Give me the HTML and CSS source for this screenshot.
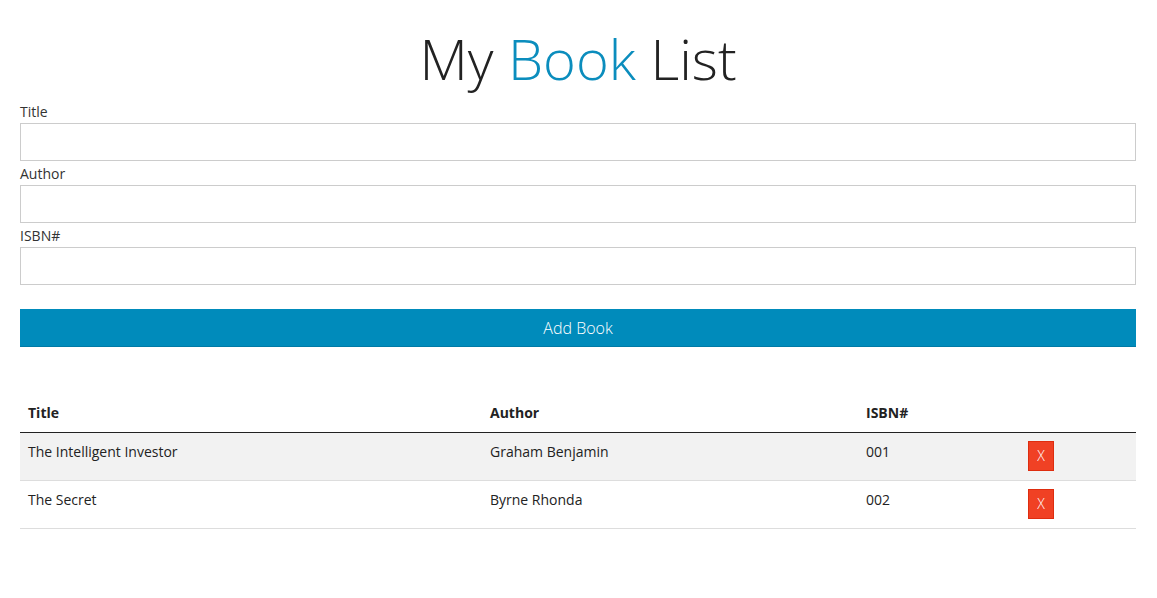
FILE: index.html
```html
<!DOCTYPE html>
<html>
<head>
<meta charset="utf-8">
<link rel="stylesheet" href="styles.css">
</head>
<body>
<div class="container">
  <h1 class="title">My <span class="accent">Book</span> List</h1>
  <form class="book-form">
    <div class="field">
      <label>Title</label>
      <input type="text" class="input">
    </div>
    <div class="field">
      <label>Author</label>
      <input type="text" class="input">
    </div>
    <div class="field">
      <label>ISBN#</label>
      <input type="text" class="input">
    </div>
    <button type="button" class="btn-add">Add Book</button>
  </form>
  <table class="book-table">
    <thead>
      <tr>
        <th class="c-title">Title</th>
        <th class="c-author">Author</th>
        <th class="c-isbn">ISBN#</th>
        <th class="c-del"></th>
      </tr>
    </thead>
    <tbody>
      <tr class="striped">
        <td>The Intelligent Investor</td>
        <td>Graham Benjamin</td>
        <td>001</td>
        <td><a class="btn-del">X</a></td>
      </tr>
      <tr>
        <td>The Secret</td>
        <td>Byrne Rhonda</td>
        <td>002</td>
        <td><a class="btn-del">X</a></td>
      </tr>
    </tbody>
  </table>
</div>
</body>
</html>
```
FILE: styles.css
```css
* { box-sizing: border-box; }
body {
  margin: 0;
  font-family: "Open Sans", sans-serif;
  font-size: 14px;
  line-height: 22px;
  color: #222;
  background: #fff;
}
.container {
  padding: 0 21px 0 20px;
}
.title {
  margin: 22px 0 5px;
  text-align: center;
  font-weight: 300;
  font-size: 56px;
  line-height: 73px;
  color: #222;
}
.accent { color: #0b8dbd; }
.book-form { display: flex; flex-direction: column; margin-top: 0; }
.field { display: flex; flex-direction: column; }
.field label {
  display: block;
  height: 23px;
  line-height: 22px;
  padding-top: 1px;
  color: #333;
}
.input {
  height: 38px;
  width: 100%;
  border: 1px solid #ccc;
  border-radius: 0;
  margin: 0 0 1px;
  padding: 0 8px;
  font-family: inherit;
  font-size: 14px;
}
.btn-add {
  margin-top: 23px;
  height: 38px;
  width: 100%;
  border: none;
  border-bottom: 1px solid #007aa6;
  background: #008bbb;
  color: #fff;
  font-family: "Open Sans", sans-serif;
  font-size: 16px;
  font-weight: 300;
  padding: 0;
}
.book-table {
  margin-top: 47px;
  width: 100%;
  border-collapse: collapse;
}
.book-table th, .book-table td {
  text-align: left;
  vertical-align: top;
  padding: 8px;
}
.book-table th {
  font-weight: 700;
  border-bottom: 1px solid #222;
}
.book-table td {
  padding-bottom: 9px;
  border-bottom: 1px solid #ddd;
}
.c-title { width: 462px; }
.c-author { width: 376px; }
.c-isbn { width: 162px; }
.striped td { background: #f2f2f2; }
.btn-del {
  display: block;
  width: 26px;
  height: 30px;
  background: #f04124;
  border: 1px solid #de2d0f;
  color: #fff;
  text-align: center;
  line-height: 28px;
  font-size: 14px;
  font-weight: 300;
}
```
